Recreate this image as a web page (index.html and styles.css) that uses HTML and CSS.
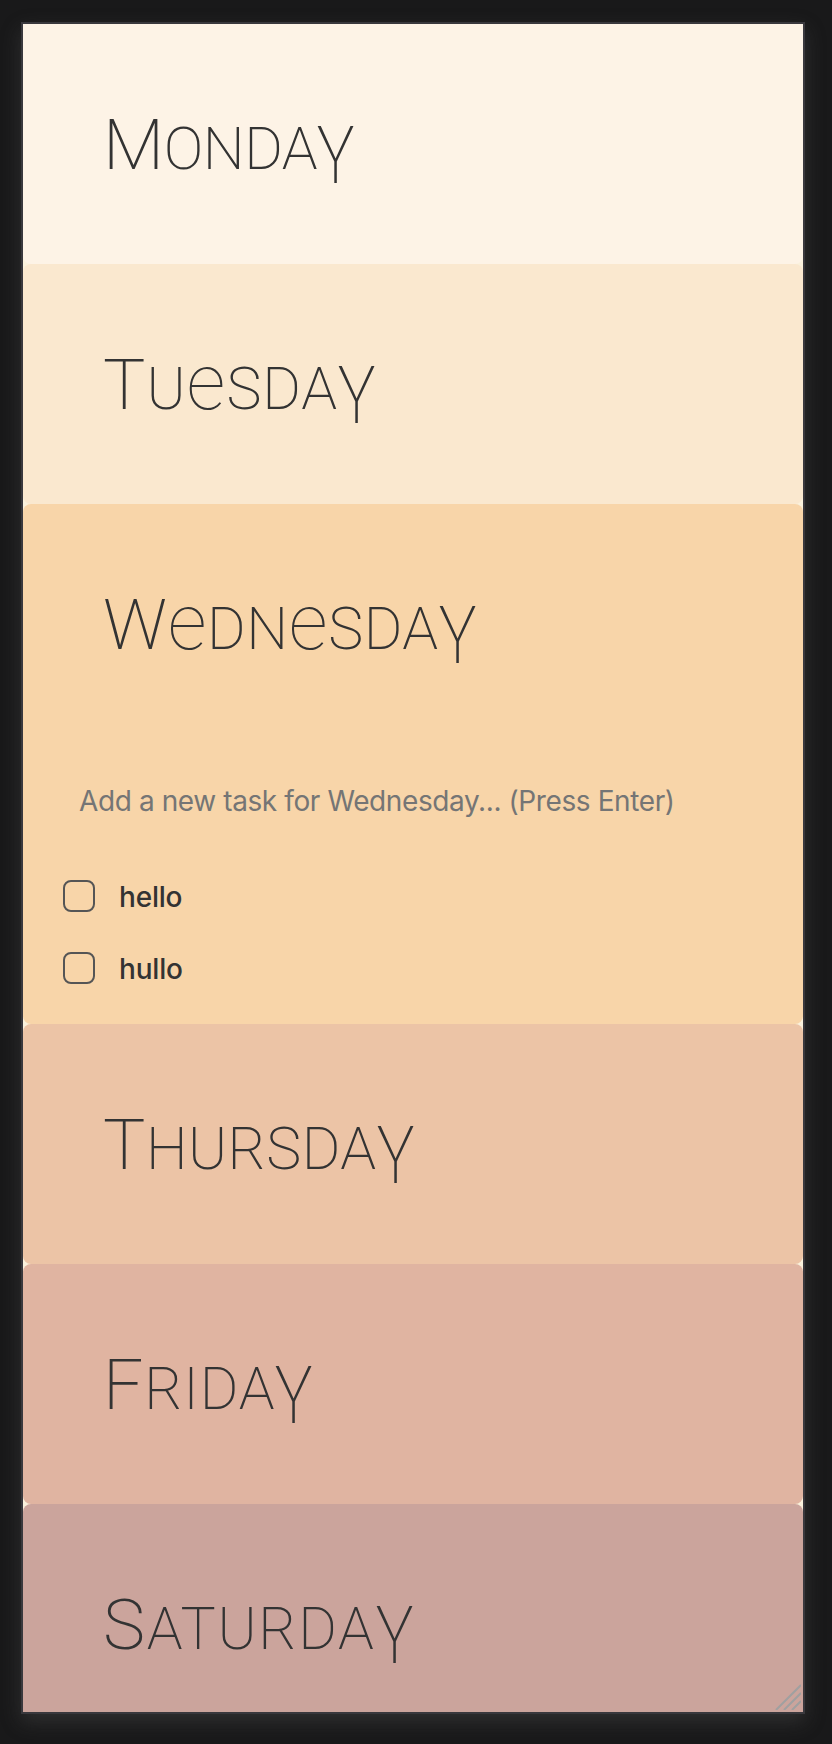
FILE: index.html
```
<!DOCTYPE html>
<html lang="en">
<head>
<meta charset="utf-8">
<title>Weekly tasks</title>
<link rel="stylesheet" href="styles.css">
</head>
<body>
<main class="planner">
  <section class="day monday"><h2 class="day-name">Monda<span class="y">y</span></h2></section>
  <section class="day tuesday"><h2 class="day-name">Tu<span class="e">e</span>sda<span class="y">y</span></h2></section>
  <section class="day wednesday">
    <h2 class="day-name">W<span class="e">e</span>dn<span class="e">e</span>sda<span class="y">y</span></h2>
    <input class="new-task" type="text" placeholder="Add a new task for Wednesday... (Press Enter)">
    <ul class="tasks">
      <li class="task"><span class="check"></span><span class="label">hello</span></li>
      <li class="task"><span class="check"></span><span class="label">hullo</span></li>
    </ul>
  </section>
  <section class="day thursday"><h2 class="day-name">Thursda<span class="y">y</span></h2></section>
  <section class="day friday"><h2 class="day-name">Frida<span class="y">y</span></h2></section>
  <section class="day saturday"><h2 class="day-name">Saturda<span class="y">y</span></h2></section>
  <svg class="grip" width="26" height="26" viewBox="0 0 26 26"><path d="M1 26 26 1M9 26 26 9M17 26 26 17"/></svg>
</main>
</body>
</html>
```
FILE: styles.css
```
* { box-sizing: border-box; }
body { margin: 0; height: 1744px; padding: 22px 27px 30px 21px; background: #19191a; overflow: hidden; font-family: Inter, "Liberation Sans", sans-serif; }
.planner { position: relative; height: 1692px; overflow: hidden; border: 2px solid #39383d; background: #faf1dc; box-shadow: 0 8px 18px rgba(80, 80, 80, .4); }
.day { height: 240px; border-radius: 8px; padding: 81px 80px 0; color: #333; }
.monday { background: #fdf3e6; border-radius: 0 0 8px 8px; }
.tuesday { background: #fae8cf; }
.wednesday { background: #f8d5a9; height: 520px; }
.thursday { background: #ecc4a6; }
.friday { background: #e0b4a1; }
.saturday { background: #cba49c; }
.day-name { margin: 0; height: 80px; font-family: Roboto, sans-serif; font-size: 59px; line-height: 80px; font-weight: 220; letter-spacing: 1px; text-transform: uppercase; white-space: nowrap; }
.day-name::first-letter { font-size: 71px; font-weight: 170; }
.monday .day-name { letter-spacing: -.4px; }
.wednesday .day-name { letter-spacing: .6px; }
.thursday .day-name { letter-spacing: .5px; }
.friday .day-name { letter-spacing: .9px; }
.saturday .day-name { letter-spacing: 1.7px; }
.e { text-transform: none; font-size: 77px; line-height: 0; font-weight: 150; }
.y { display: inline-block; font-size: 79px; line-height: 0; font-weight: 200; letter-spacing: 0; vertical-align: -14px; margin: 0 -5px; transform: scaleX(.8); }
.new-task { display: block; width: 700px; height: 64px; margin: 104px 0 0 -24px; padding: 0; border: 0; background: none; outline: 0; font: 400 28px Inter, sans-serif; letter-spacing: -.4px; color: #333; }
.new-task::placeholder { color: #757575; opacity: 1; }
.tasks { list-style: none; margin: 27px 0 0 -40px; padding: 0; }
.task { display: flex; align-items: center; gap: 24px; height: 72px; font-size: 28px; font-weight: 500; letter-spacing: -.2px; }
.label { padding-top: 2px; }
.check { width: 32px; height: 32px; border: 2px solid #555; border-radius: 8px; }
.grip { position: absolute; right: 2px; bottom: 2px; fill: none; stroke: #a0a0a0; stroke-width: 2; }
```
